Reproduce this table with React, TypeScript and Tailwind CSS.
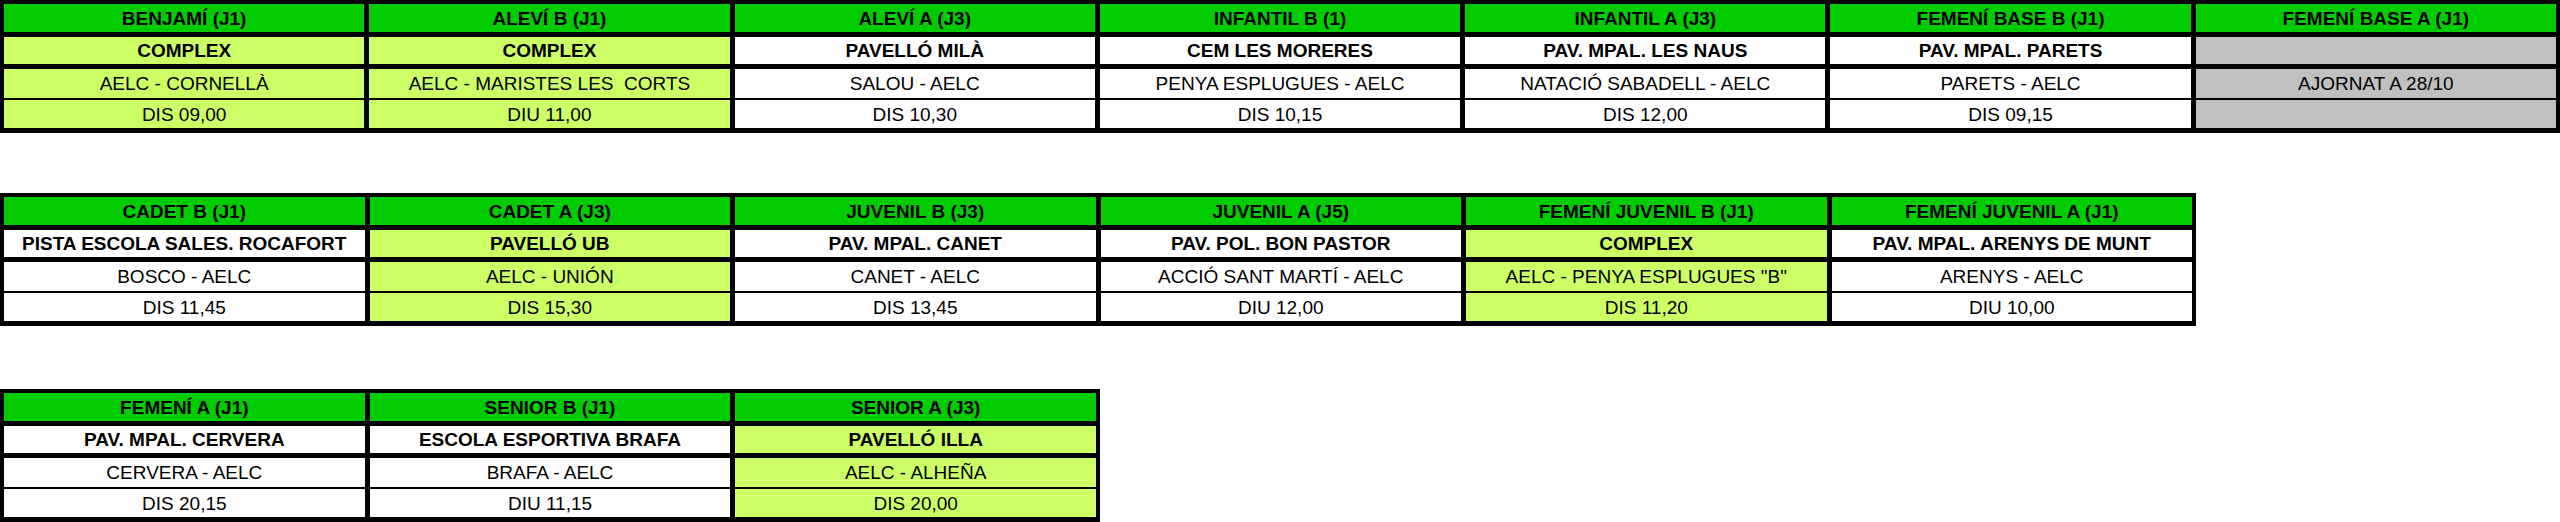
type Tone = "w" | "lg" | "gray";

type Col = {
  title: string;
  venue: string;
  match: string;
  time: string;
  tone: Tone;
};

const t1: Col[] = [
  { title: "BENJAMÍ (J1)", venue: "COMPLEX", match: "AELC - CORNELLÀ", time: "DIS 09,00", tone: "lg" },
  { title: "ALEVÍ B (J1)", venue: "COMPLEX", match: "AELC - MARISTES LES\u00a0 CORTS", time: "DIU 11,00", tone: "lg" },
  { title: "ALEVÍ A (J3)", venue: "PAVELLÓ MILÀ", match: "SALOU - AELC", time: "DIS 10,30", tone: "w" },
  { title: "INFANTIL B (1)", venue: "CEM LES MORERES", match: "PENYA ESPLUGUES - AELC", time: "DIS 10,15", tone: "w" },
  { title: "INFANTIL A (J3)", venue: "PAV. MPAL. LES NAUS", match: "NATACIÓ SABADELL - AELC", time: "DIS 12,00", tone: "w" },
  { title: "FEMENÍ BASE B (J1)", venue: "PAV. MPAL. PARETS", match: "PARETS - AELC", time: "DIS 09,15", tone: "w" },
  { title: "FEMENÍ BASE A (J1)", venue: "", match: "AJORNAT A 28/10", time: "", tone: "gray" },
];

const t2: Col[] = [
  { title: "CADET B (J1)", venue: "PISTA ESCOLA SALES. ROCAFORT", match: "BOSCO - AELC", time: "DIS 11,45", tone: "w" },
  { title: "CADET A (J3)", venue: "PAVELLÓ UB", match: "AELC - UNIÓN", time: "DIS 15,30", tone: "lg" },
  { title: "JUVENIL B (J3)", venue: "PAV. MPAL. CANET", match: "CANET - AELC", time: "DIS 13,45", tone: "w" },
  { title: "JUVENIL A (J5)", venue: "PAV. POL. BON PASTOR", match: "ACCIÓ SANT MARTÍ - AELC", time: "DIU 12,00", tone: "w" },
  { title: "FEMENÍ JUVENIL B (J1)", venue: "COMPLEX", match: 'AELC - PENYA ESPLUGUES "B"', time: "DIS 11,20", tone: "lg" },
  { title: "FEMENÍ JUVENIL A (J1)", venue: "PAV. MPAL. ARENYS DE MUNT", match: "ARENYS - AELC", time: "DIU 10,00", tone: "w" },
];

const t3: Col[] = [
  { title: "FEMENÍ A (J1)", venue: "PAV. MPAL. CERVERA", match: "CERVERA - AELC", time: "DIS 20,15", tone: "w" },
  { title: "SENIOR B (J1)", venue: "ESCOLA ESPORTIVA BRAFA", match: "BRAFA - AELC", time: "DIU 11,15", tone: "w" },
  { title: "SENIOR A (J3)", venue: "PAVELLÓ ILLA", match: "AELC - ALHEÑA", time: "DIS 20,00", tone: "lg" },
];

const toneBg: Record<Tone, string> = {
  w: "bg-white",
  lg: "bg-[#ccff66]",
  gray: "bg-[#c0c0c0]",
};

function Cell({ text, tone, bold, h }: { text: string; tone: Tone; bold?: boolean; h: string }) {
  return (
    <div
      className={`${toneBg[tone]} ${h} flex items-center justify-center whitespace-pre text-black ${bold ? "font-bold" : "font-normal"}`}
    >
      {text}
    </div>
  );
}

function Table({ cols, width, grid }: { cols: Col[]; width: string; grid: string }) {
  return (
    <div className={`${width} bg-black pt-[4px] px-[4px] pb-[5px] flex flex-col`}>
      {/* header */}
      <div className={`grid ${grid} gap-x-[5px]`}>
        {cols.map((c) => (
          <div key={c.title} className="bg-[#00cc00] h-[28px] flex items-center justify-center font-bold text-black">
            {c.title}
          </div>
        ))}
      </div>
      <div className={`grid ${grid} gap-x-[5px] mt-[5px]`}>
        {cols.map((c) => (
          <Cell key={c.title} text={c.venue} tone={c.tone} bold h="h-[27px]" />
        ))}
      </div>
      <div className={`grid ${grid} gap-x-[5px] mt-[5px]`}>
        {cols.map((c) => (
          <Cell key={c.title} text={c.match} tone={c.tone} h="h-[29px]" />
        ))}
      </div>
      <div className={`grid ${grid} gap-x-[5px] mt-[2px]`}>
        {cols.map((c) => (
          <Cell key={c.title} text={c.time} tone={c.tone} h="h-[28px]" />
        ))}
      </div>
    </div>
  );
}

export default function App() {
  return (
    <div className="w-[2560px] h-[522px] bg-white overflow-hidden flex flex-col font-['Liberation_Sans',Arial,sans-serif] text-[19px] leading-none">
      <Table cols={t1} width="w-[2560px]" grid="grid-cols-7" />
      <div className="mt-[60px]">
        <Table cols={t2} width="w-[2196px]" grid="grid-cols-6" />
      </div>
      <div className="mt-[63px]">
        <Table cols={t3} width="w-[1100px]" grid="grid-cols-3" />
      </div>
    </div>
  );
}
